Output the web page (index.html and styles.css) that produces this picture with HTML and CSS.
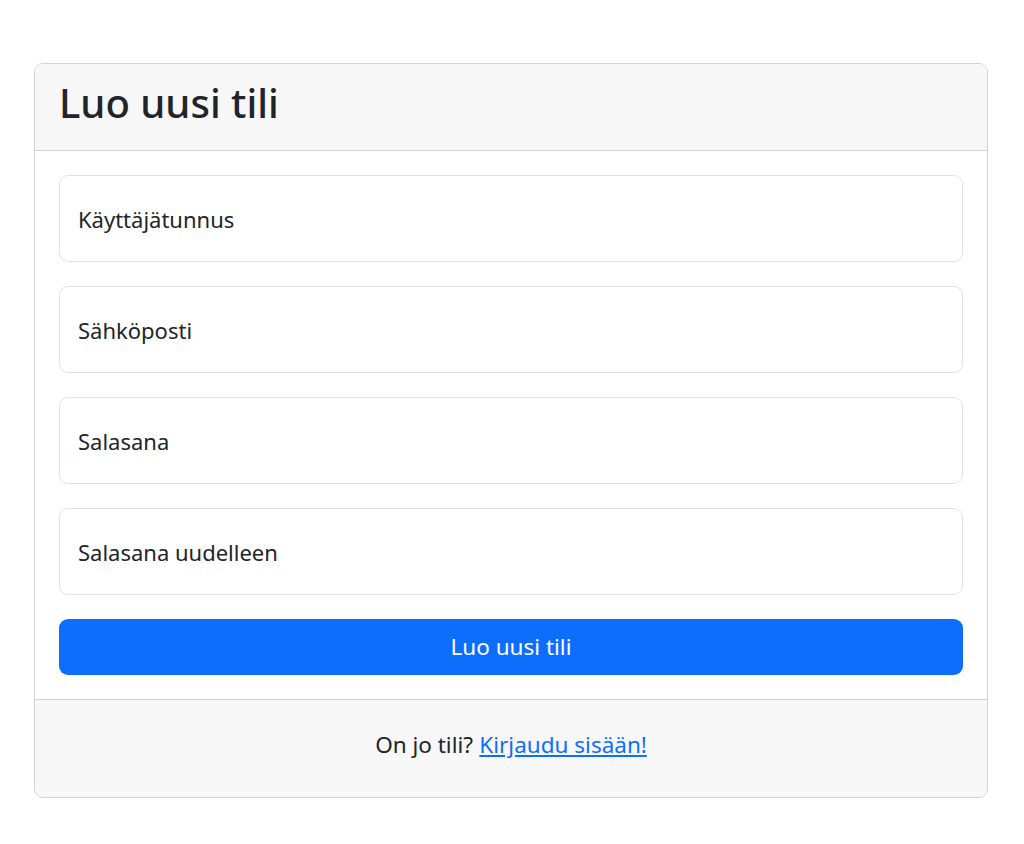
FILE: index.html
```html
<!DOCTYPE html>
<html lang="fi">
<head>
<meta charset="utf-8">
<title>Luo uusi tili</title>
<link rel="stylesheet" href="styles.css">
</head>
<body>
<main class="page">
  <div class="card">
    <div class="card-header">
      <h1 class="title">Luo uusi tili</h1>
    </div>
    <form class="card-body">
      <div class="field"><span class="field-label">Käyttäjätunnus</span></div>
      <div class="field"><span class="field-label">Sähköposti</span></div>
      <div class="field"><span class="field-label">Salasana</span></div>
      <div class="field"><span class="field-label">Salasana uudelleen</span></div>
      <button type="button" class="btn-primary">Luo uusi tili</button>
    </form>
    <div class="card-footer">
      <span>On jo tili?</span><a href="#" class="link">Kirjaudu sisään!</a>
    </div>
  </div>
</main>
</body>
</html>
```

FILE: styles.css
```css
* { box-sizing: border-box; }
html, body { margin: 0; padding: 0; background: #fff; }
body {
  font-family: "Noto Sans", "Open Sans", sans-serif;
  color: #212529;
}
.page {
  padding: 63px 36px 0 34px;
}
.card {
  border: 1px solid #d3d3d3;
  border-radius: 9px;
  overflow: hidden;
}
.card-header {
  background: #f7f7f7;
  border-bottom: 1px solid #d3d3d3;
  height: 87px;
  padding: 0 24px 8px;
  display: flex;
  align-items: center;
}
.title {
  margin: 0;
  font-size: 40px;
  font-weight: 500;
  line-height: 1.2;
}
.card-body {
  padding: 24px;
  display: flex;
  flex-direction: column;
  gap: 24px;
  margin: 0;
}
.field {
  height: 87px;
  border: 1px solid #dee2e6;
  border-radius: 9px;
  display: flex;
  align-items: center;
  padding: 0 18px;
}
.field-label {
  font-size: 22px;
}
.btn-primary {
  height: 56px;
  border: 0;
  border-radius: 9px;
  background: #0d6efd;
  color: #fff;
  font-family: inherit;
  font-size: 22.5px;
  padding: 0 0 2px;
}
.card-footer {
  background: #f7f7f7;
  border-top: 1px solid #d3d3d3;
  height: 98px;
  padding-bottom: 8px;
  display: flex;
  align-items: center;
  justify-content: center;
  font-size: 22.5px;
  gap: 0.28em;
}
.link {
  color: #0d6efd;
  text-decoration: underline;
}
```
